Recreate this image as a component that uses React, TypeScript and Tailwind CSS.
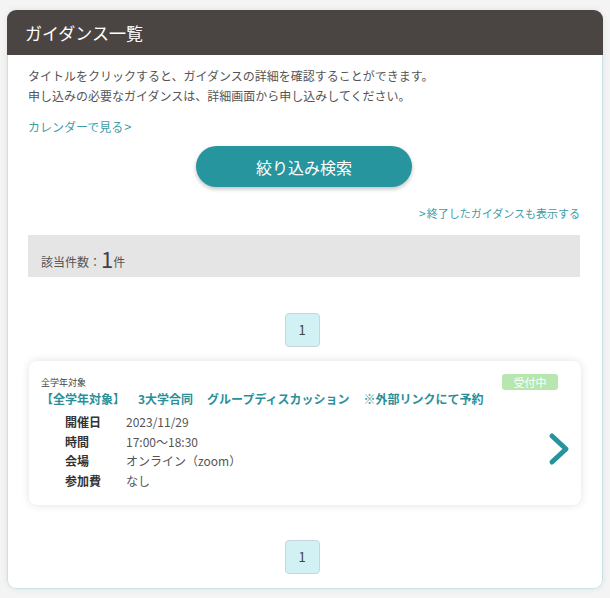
const details = [
  { label: '開催日', value: '2023/11/29' },
  { label: '時間', value: '17:00〜18:30' },
  { label: '会場', value: 'オンライン（zoom）' },
  { label: '参加費', value: 'なし' },
];

function Pager() {
  return (
    <div className="flex justify-center pr-[4px]">
      <button className="w-[35px] h-[34px] rounded-[4px] border border-[#c3d8db] bg-[#d2f1f4] text-[13px] text-[#444] flex items-center justify-center">
        1
      </button>
    </div>
  );
}

export default function App() {
  return (
    <div
      className="min-h-[598px] bg-[#f4f4f4] pt-[10px] pb-[10px] pl-[7px] pr-[7px] text-[#555]"
      style={{ fontFamily: '"Noto Sans CJK JP", "Noto Sans", sans-serif' }}
    >
      <div className="w-[596px] rounded-[9px] bg-white shadow-[0_0_6px_rgba(0,0,0,0.08)]">
        {/* Header */}
        <div className="h-[45px] rounded-t-[9px] bg-[#4a4542] pl-[18px] flex items-center">
          <h1 className="text-[17px] text-white leading-none">ガイダンス一覧</h1>
        </div>

        {/* Body */}
        <div className="border-x border-b border-[#c8e3e6] rounded-b-[9px] pl-[20px] pr-[22px] pt-[11px] pb-[14px]">
          <p className="text-[12px] leading-[20px]">
            タイトルをクリックすると、ガイダンスの詳細を確認することができます。
            <br />
            申し込みの必要なガイダンスは、詳細画面から申し込みしてください。
          </p>

          <a className="block mt-[11px] text-[12px] leading-[20px] text-[#3f9ca7]">
            カレンダーで見る<span className="text-[13px] ml-[1px]">&gt;</span>
          </a>

          <div className="mt-[9px] flex justify-center">
            <button className="w-[216px] h-[41px] rounded-full bg-[#27959e] text-white text-[16px] shadow-[0_2px_4px_rgba(0,0,0,0.25)]">
              絞り込み検索
            </button>
          </div>

          <div className="mt-[17px] text-right text-[11px] leading-[18px] text-[#3f9ca7]">
            <span className="text-[12px] mr-[1px]">&gt;</span>終了したガイダンスも表示する
          </div>

          <div className="mt-[13px] h-[42px] bg-[#e5e5e5] pl-[13px] flex items-end pb-[8px]">
            <span className="text-[12px] leading-none pb-[1px]">該当件数：</span>
            <span className="text-[22px] leading-none text-[#444]">1</span>
            <span className="text-[12px] leading-none pb-[1px]">件</span>
          </div>

          <div className="mt-[36px]">
            <Pager />
          </div>

          {/* Card */}
          <div className="relative mt-[14px] ml-px mr-[-1px] h-[144px] rounded-[8px] bg-white shadow-[0_0_8px_rgba(0,0,0,0.12)] pl-[12px] pt-[15px]">
            <span className="absolute top-[13px] right-[23px] h-[16px] w-[56px] rounded-[3px] bg-[#b7e6af] text-white text-[11px] leading-[16px] text-center">
              受付中
            </span>
            <div className="text-[9px] leading-[14px] text-[#444]">全学年対象</div>
            <div className="flex text-[12px] leading-[18px] font-bold text-[#2a8f99]">
              <span>【全学年対象】</span>
              <span className="ml-[13px]">3大学合同</span>
              <span className="ml-[14px]">グループディスカッション</span>
              <span className="ml-[14px]">※外部リンクにて予約</span>
            </div>
            <dl className="mt-[4px] pl-[24px] text-[12px] leading-[19.5px]">
              {details.map((d) => (
                <div key={d.label} className="flex">
                  <dt className="w-[61px] font-bold text-[#333]">{d.label}</dt>
                  <dd className="text-[#555]">{d.value}</dd>
                </div>
              ))}
            </dl>
            <svg
              className="absolute right-[11px] top-[71px] w-[22px] h-[34px]"
              viewBox="0 0 22 34"
              fill="none"
              stroke="#26949c"
              strokeWidth="5"
              strokeLinecap="round"
              strokeLinejoin="round"
            >
              <polyline points="4,4 18,17 4,30" />
            </svg>
          </div>

          <div className="mt-[35px]">
            <Pager />
          </div>
        </div>
      </div>
    </div>
  );
}
